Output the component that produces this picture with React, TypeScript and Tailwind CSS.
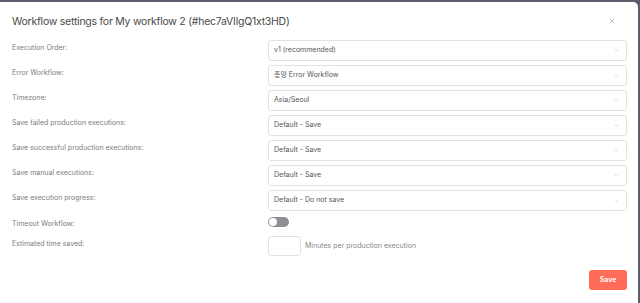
import { ChevronDown, X } from "lucide-react";

const rows = [
  { label: "Execution Order:", value: "v1 (recommended)" },
  { label: "Error Workflow:", value: "총망 Error Workflow" },
  { label: "Timezone:", value: "Asia/Seoul" },
  { label: "Save failed production executions:", value: "Default - Save" },
  { label: "Save successful production executions:", value: "Default - Save" },
  { label: "Save manual executions:", value: "Default - Save" },
  { label: "Save execution progress:", value: "Default - Do not save" },
];

const Select = ({ value }: { value: string }) => (
  <div className="flex h-[21px] w-[359px] items-center justify-between rounded-[3px] border border-[#e2e2e2] pl-[5px] pr-[6px] text-[7px] text-[#555]">
    <span>{value}</span>
    <ChevronDown className="h-[7px] w-[7px] text-[#b5b5b5]" strokeWidth={1.5} />
  </div>
);

const App = () => {
  return (
    <div className="h-[303px] w-[640px] overflow-hidden bg-[#5d5c6b] font-['Inter','Noto_Sans_CJK_KR',sans-serif]">
      <div className="mt-[2px] mr-[2px] h-[301px] rounded-tr-[5px] bg-white">
        <div className="flex h-[38px] items-center justify-between pl-3 pr-[22px] pt-[1px]">
          <h1 className="text-[10.5px] tracking-[-0.25px] text-[#4a4a4a]">
            Workflow settings for My workflow 2 (#hec7aVIlgQ1xt3HD)
          </h1>
          <X className="mb-[2px] h-[8px] w-[8px] text-[#8a8a8a]" strokeWidth={1.5} />
        </div>
        <div className="flex flex-col gap-[4px] pl-3">
          {rows.map((r) => (
            <div key={r.label} className="flex items-center">
              <div className="w-[256px] pb-[4px] text-[7px] text-[#7d7d7d]">{r.label}</div>
              <Select value={r.value} />
            </div>
          ))}
          <div className="mt-[1px] flex h-[11px] items-center">
            <div className="w-[256px] pt-[6px] text-[7px] text-[#7d7d7d]">Timeout Workflow:</div>
            <div className="flex h-[10px] w-[21px] items-center rounded-full bg-[#8e8e95] px-[1px]">
              <div className="h-[8px] w-[8px] rounded-full bg-white" />
            </div>
          </div>
          <div className="mt-[5px] flex items-center">
            <div className="w-[256px] pb-[4px] text-[7px] text-[#7d7d7d]">Estimated time saved:</div>
            <div className="h-[20px] w-[33px] rounded-[3px] border border-[#e2e2e2]" />
            <span className="ml-[4px] text-[7px] text-[#888]">Minutes per production execution</span>
          </div>
        </div>
        <div className="mt-[14px] flex justify-end pr-[11px]">
          <button className="h-[20px] w-[38px] rounded-[3px] bg-[#ff6d5a] text-[7px] font-semibold text-white">
            Save
          </button>
        </div>
      </div>
    </div>
  );
};

export default App;
